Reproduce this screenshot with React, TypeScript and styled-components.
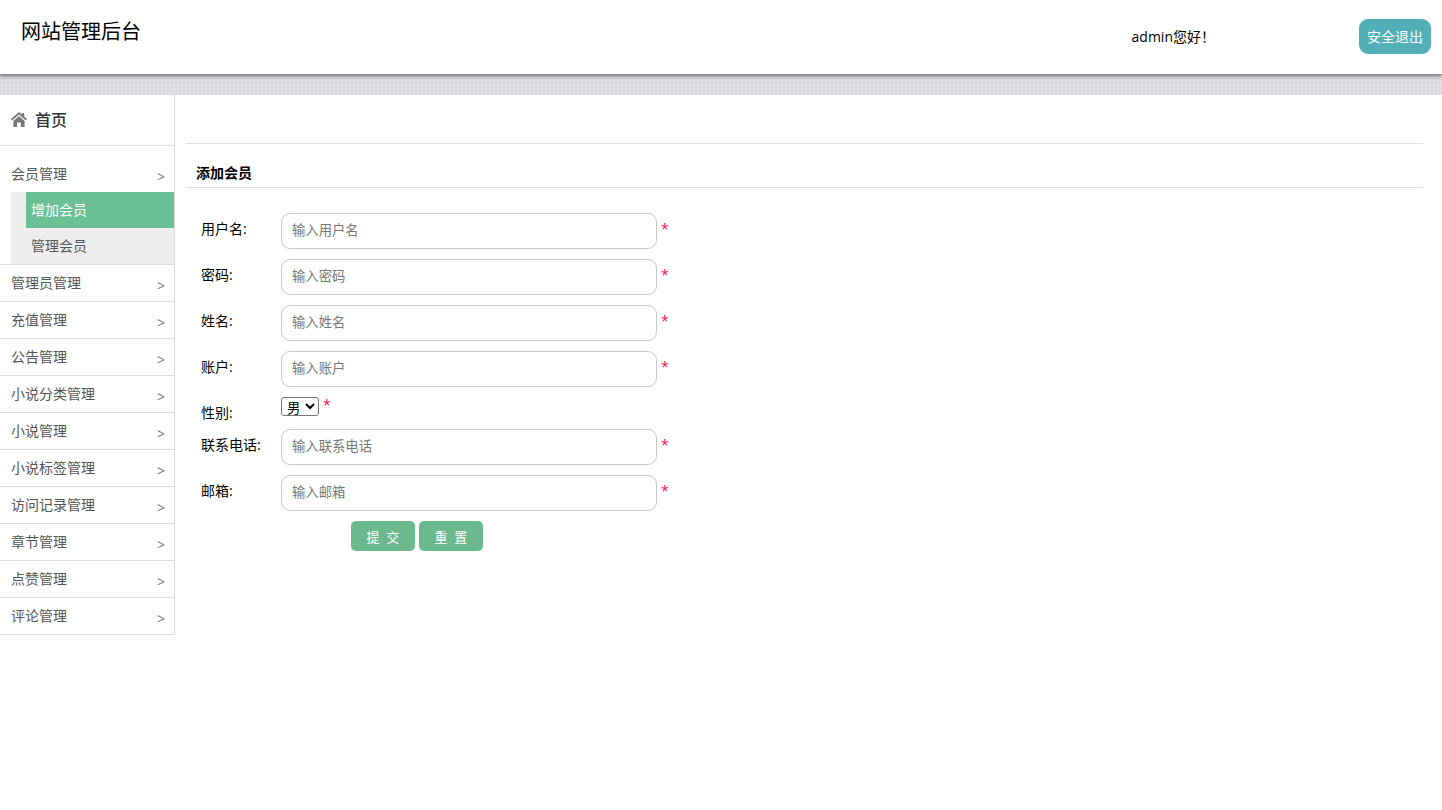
import React from 'react'
import styled, { createGlobalStyle } from 'styled-components'

const GlobalStyle = createGlobalStyle`
  html, body {
    margin: 0;
    padding: 0;
    background: #fff;
    font-family: 'Open Sans', 'Noto Sans CJK SC', sans-serif;
  }
  * {
    box-sizing: border-box;
  }
`

const Page = styled.div`
  width: 1442px;
  height: 810px;
  overflow: hidden;
  background: #fff;
`

const Header = styled.header`
  height: 75px;
  display: flex;
  align-items: flex-start;
  padding: 0 11px 0 21px;
  background: #fff;
  border-bottom: 1px solid #8c8c8c;
  position: relative;
  z-index: 1;
  box-shadow: 0 1px 4px rgba(0, 0, 0, 0.5);
`

const Title = styled.h1`
  margin: 0;
  font-size: 20px;
  font-weight: 400;
  line-height: 63px;
  color: #000;
`

const Greeting = styled.span`
  margin-left: auto;
  margin-right: 144px;
  font-size: 14px;
  line-height: 74px;
  color: #000;
`

const LogoutButton = styled.button`
  width: 72px;
  height: 35px;
  margin-top: 19px;
  padding: 0 0 2px;
  border: 0;
  border-radius: 9px;
  background: #52afb7;
  color: #fff;
  font-family: inherit;
  font-size: 14px;
`

const DottedBand = styled.div`
  height: 20px;
  background-color: #d9dbe0;
  background-image: radial-gradient(#e3e4e8 0.7px, transparent 0.9px);
  background-size: 4px 4px;
`

const Body = styled.div`
  display: flex;
  align-items: flex-start;
`

const Sidebar = styled.aside`
  width: 175px;
  flex: none;
  border-right: 1px solid #d9d9d9;
`

const HomeRow = styled.div`
  height: 51px;
  display: flex;
  align-items: center;
  gap: 8px;
  padding: 0 0 2px 11px;
  border-bottom: 1px solid #e0e0e0;
  color: #333;
  font-size: 16px;
  font-weight: 500;
`

const HomeIcon = styled.svg`
  width: 16px;
  height: 15px;
  fill: #777;
`

const MenuGroup = styled.div<{ $open?: boolean }>`
  border-bottom: 1px solid #dcdcdc;
  padding-top: ${({ $open }) => ($open ? '10px' : '0')};
`

const MenuTitle = styled.div`
  height: 36px;
  display: flex;
  align-items: center;
  justify-content: space-between;
  padding: 0 9px 2px 11px;
  font-size: 14px;
  color: #555;
`

const Chevron = styled.span`
  font-size: 14px;
  color: #777;
  padding-top: 7px;
`

const SubMenu = styled.div`
  margin-left: 11px;
  padding-left: 15px;
  background: #eee;
`

const SubItem = styled.div<{ $active?: boolean }>`
  height: 36px;
  line-height: 36px;
  padding-left: 5px;
  font-size: 14px;
  background: ${({ $active }) => ($active ? '#6abf95' : 'transparent')};
  color: ${({ $active }) => ($active ? '#fff' : '#555')};
`

const Main = styled.main`
  flex: 1;
  padding: 48px 19px 0 11px;
`

const TopRule = styled.div`
  height: 1px;
  background: #e0e0e0;
`

const SectionTitle = styled.h2`
  margin: 0;
  height: 44px;
  padding: 19px 0 0 10px;
  border-bottom: 1px solid #e0e0e0;
  font-size: 14px;
  line-height: 20px;
  font-weight: 700;
  color: #000;
`

const Form = styled.form`
  padding: 25px 0 0 15px;
`

const Row = styled.div`
  display: flex;
  align-items: flex-start;
  margin-bottom: 10px;
`

const SelectRow = styled(Row)`
  margin-bottom: 13px;
  height: 19px;
`

const Label = styled.label`
  width: 80px;
  flex: none;
  font-size: 14px;
  line-height: 18px;
  padding-top: 7px;
  color: #000;
`

const TextInput = styled.input`
  width: 376px;
  height: 36px;
  padding: 0 10px 2px;
  border: 1px solid #c8c8c8;
  border-radius: 9px;
  background: #fff;
  font-family: inherit;
  font-size: 13.33px;
  outline: none;
  &::placeholder {
    color: #777;
  }
`

const Required = styled.span`
  margin-left: 4px;
  font-size: 14px;
  line-height: 31px;
  color: #f0134d;
`

const SelectRequired = styled(Required)`
  line-height: 15px;
`

const GenderSelect = styled.select`
  width: 38px;
  height: 19px;
  padding: 0 0 0 1px;
  font-family: inherit;
  font-size: 13.33px;
  background: #fff;
  color: #000;
  border: 1px solid #767676;
  border-radius: 3px;
`

const Actions = styled.div`
  display: flex;
  gap: 4px;
  padding-left: 150px;
`

const ActionButton = styled.button`
  width: 64px;
  height: 30px;
  padding: 0;
  border: 0;
  border-radius: 5px;
  background: #6bb88f;
  color: #fff;
  font-family: inherit;
  font-size: 13px;
`

const menus = ['管理员管理', '充值管理', '公告管理', '小说分类管理', '小说管理', '小说标签管理', '访问记录管理', '章节管理', '点赞管理', '评论管理']

const fieldsTop = [
  { label: '用户名:', hint: '输入用户名' },
  { label: '密码:', hint: '输入密码' },
  { label: '姓名:', hint: '输入姓名' },
  { label: '账户:', hint: '输入账户' },
]

const fieldsBottom = [
  { label: '联系电话:', hint: '输入联系电话' },
  { label: '邮箱:', hint: '输入邮箱' },
]

const Field = ({ label, hint }: { label: string; hint: string }) => (
  <Row>
    <Label>{label}</Label>
    <TextInput placeholder={hint} />
    <Required>*</Required>
  </Row>
)

export default function App() {
  return (
    <Page>
      <GlobalStyle />
      <Header>
        <Title>网站管理后台</Title>
        <Greeting>admin您好！</Greeting>
        <LogoutButton type='button'>安全退出</LogoutButton>
      </Header>
      <DottedBand />
      <Body>
        <Sidebar>
          <HomeRow>
            <HomeIcon viewBox='0 0 16 15'>
              <path d='M8 0 L10.8 2.5 V1 H13.2 V4.6 L16 7.1 L14.8 8.5 L8 2.5 L1.2 8.5 L0 7.1 Z M8 4 L13.6 9 V15 H9.8 V10.4 H6.2 V15 H2.4 V9 Z' />
            </HomeIcon>
            首页
          </HomeRow>
          <MenuGroup $open>
            <MenuTitle>
              会员管理
              <Chevron>&gt;</Chevron>
            </MenuTitle>
            <SubMenu>
              <SubItem $active>增加会员</SubItem>
              <SubItem>管理会员</SubItem>
            </SubMenu>
          </MenuGroup>
          {menus.map((name) => (
            <MenuGroup key={name}>
              <MenuTitle>
                {name}
                <Chevron>&gt;</Chevron>
              </MenuTitle>
            </MenuGroup>
          ))}
        </Sidebar>
        <Main>
          <TopRule />
          <SectionTitle>添加会员</SectionTitle>
          <Form>
            {fieldsTop.map((f) => (
              <Field key={f.label} {...f} />
            ))}
            <SelectRow>
              <Label>性别:</Label>
              <GenderSelect defaultValue='男'>
                <option>男</option>
                <option>女</option>
              </GenderSelect>
              <SelectRequired>*</SelectRequired>
            </SelectRow>
            {fieldsBottom.map((f) => (
              <Field key={f.label} {...f} />
            ))}
            <Actions>
              <ActionButton type='button'>提&nbsp;&nbsp;交</ActionButton>
              <ActionButton type='button'>重&nbsp;&nbsp;置</ActionButton>
            </Actions>
          </Form>
        </Main>
      </Body>
    </Page>
  )
}
